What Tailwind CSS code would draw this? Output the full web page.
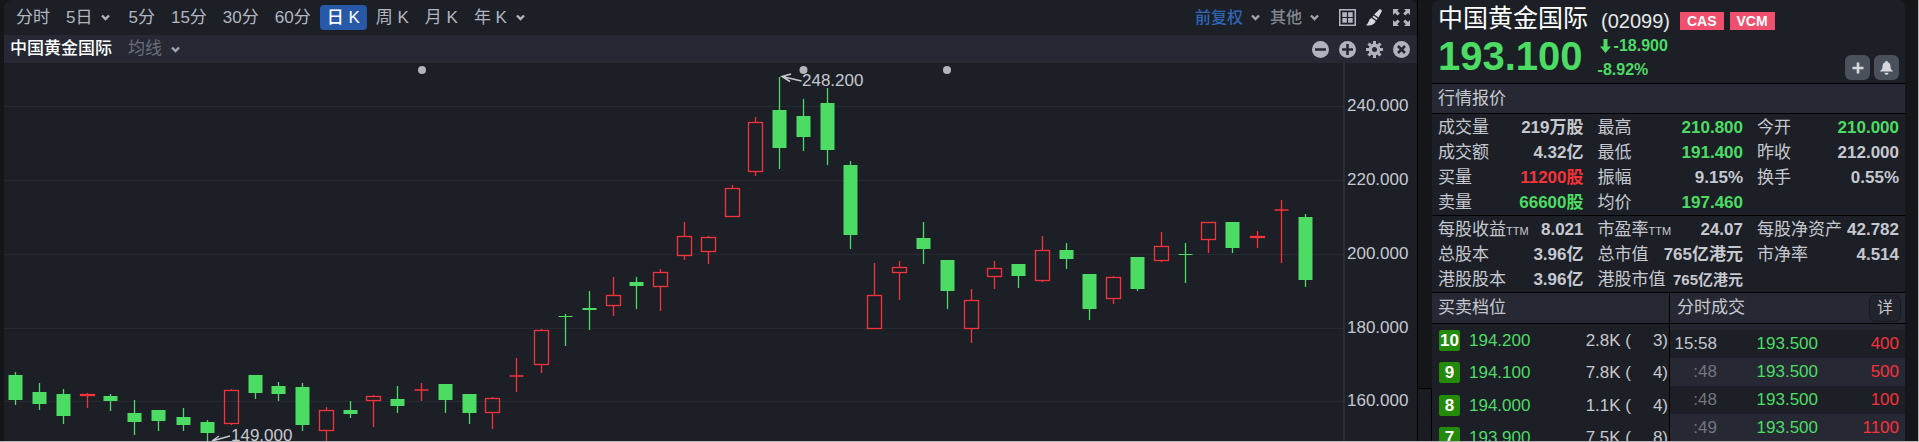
<!DOCTYPE html>
<html lang="zh-CN">
<head>
  <meta charset="UTF-8" />
  <meta name="viewport" content="width=device-width, initial-scale=1" />
  <title>中国黄金国际 (02099)</title>
  <script src="https://cdn.jsdelivr.net/npm/@tailwindcss/browser@4"></script>
</head>
<body class="flex h-screen overflow-hidden border-r border-b border-[#b4b4b8] bg-[#14161a] pl-1 font-['Liberation_Sans','Noto_Sans_CJK_SC',sans-serif] text-[#c6c8d0]">

  <!-- Chart panel -->
  <main class="flex min-w-0 flex-1 flex-col overflow-hidden rounded-t-lg bg-[#1c1f26]">
    <!-- Periods -->
    <nav class="flex h-[35px] shrink-0 items-center justify-between pr-[7px] pl-3 text-[17px] text-[#b3b6c0]">
      <div class="flex items-center gap-4 whitespace-nowrap">
        <button>分时</button>
        <button class="flex items-center gap-[9px] pr-0.5">5日
          <svg class="h-[7px] w-[9px]" viewBox="0 0 9 7" fill="none" stroke="currentColor" stroke-width="2.4"><path d="M1 1.5 4.5 5 8 1.5" /></svg>
        </button>
        <button>5分</button>
        <button>15分</button>
        <button>30分</button>
        <button>60分</button>
        <button class="-mx-[7px] h-[25px] rounded-sm bg-[#2858a8] px-[7px] leading-[25px] font-medium text-white">日 K</button>
        <button>周 K</button>
        <button>月 K</button>
        <button class="flex items-center gap-[9px]">年 K
          <svg class="h-[7px] w-[9px]" viewBox="0 0 9 7" fill="none" stroke="currentColor" stroke-width="2.4"><path d="M1 1.5 4.5 5 8 1.5" /></svg>
        </button>
      </div>
      <div class="flex items-center gap-2.5 text-base whitespace-nowrap">
        <button class="flex items-center gap-2 font-medium text-[#2f66b8]">前复权
          <svg class="h-[7px] w-[9px] text-[#a4a7b0]" viewBox="0 0 9 7" fill="none" stroke="currentColor" stroke-width="2.4"><path d="M1 1.5 4.5 5 8 1.5" /></svg>
        </button>
        <button class="mr-2.5 flex items-center gap-2 font-medium text-[#83868f]">其他
          <svg class="h-[7px] w-[9px] text-[#a4a7b0]" viewBox="0 0 9 7" fill="none" stroke="currentColor" stroke-width="2.4"><path d="M1 1.5 4.5 5 8 1.5" /></svg>
        </button>
        <button aria-label="多图">
          <svg class="size-[17px]" viewBox="0 0 17 17" fill="currentColor"><path fill-rule="evenodd" d="M0 0h17v17H0zM1.5 1.5v14h14v-14z" /><path d="M3.3 3.3h4.6v4.6H3.3zM9.1 3.3h4.6v4.6H9.1zM3.3 9.1h4.6v4.6H3.3zM9.1 9.1h4.6v4.6H9.1z" /></svg>
        </button>
        <button class="text-[#d5d7dc]" aria-label="画线">
          <svg class="size-[17px]" viewBox="0 0 17 17" fill="currentColor"><path d="M13 .8c1-1.200 3.400.2 2.700 1.700L12.500 8.600 8.200 5.500zM7.500 6.400l4.200 3-1.200 1.700-4.100-3zM5.600 9l4.100 3c-.9 3.500-5 5-9.700 4.200 2.800-1.300 2.500-6.300 5.600-7.200z" /></svg>
        </button>
        <button aria-label="全屏">
          <svg class="size-[17px]" viewBox="0 0 17 17" fill="currentColor"><path d="M0 0h6L4.200 1.800l2.600 2.600-2.200 2.200L2 4 0 6zM17 0h-6l1.800 1.800-2.600 2.600 2.200 2.200L15 4l2 2zM0 17h6l-1.800-1.800 2.600-2.600-2.200-2.200L2 13l-2-2zM17 17h-6l1.800-1.800-2.600-2.600 2.200-2.200L15 13l2-2z" /></svg>
        </button>
      </div>
    </nav>

    <!-- Indicator bar -->
    <div class="flex h-7 shrink-0 items-center justify-between bg-[#262833] pr-[7px] pl-1.5 text-[17px]">
      <div class="flex items-center gap-4">
        <h2 class="font-medium text-white">中国黄金国际</h2>
        <button class="flex items-center gap-[9px] text-[#6c6f79]">均线
          <svg class="h-[7px] w-[9px] text-[#a4a7b0]" viewBox="0 0 9 7" fill="none" stroke="currentColor" stroke-width="2.4"><path d="M1 1.5 4.5 5 8 1.5" /></svg>
        </button>
      </div>
      <div class="flex items-center gap-2.5 text-[#b0b3bb]">
        <button aria-label="缩小">
          <svg class="size-[17px]" viewBox="0 0 17 17"><circle cx="8.5" cy="8.5" r="8.5" fill="currentColor" /><path d="M3 8.5h11" stroke="#262833" stroke-width="2.6" /></svg>
        </button>
        <button aria-label="放大">
          <svg class="size-[17px]" viewBox="0 0 17 17"><circle cx="8.5" cy="8.5" r="8.5" fill="currentColor" /><path d="M3 8.5h11M8.5 3v11" stroke="#262833" stroke-width="2.6" /></svg>
        </button>
        <button aria-label="设置">
          <svg class="size-[17px]" viewBox="0 0 17 17"><circle cx="8.5" cy="8.5" r="4.2" fill="none" stroke="currentColor" stroke-width="3.4" /><path d="M8.5 0v3M8.5 14v3M0 8.5h3M14 8.5h3M2.5 2.5l2.1 2.1M12.4 12.4l2.1 2.1M2.5 14.5l2.1-2.1M12.4 4.6l2.1-2.1" stroke="currentColor" stroke-width="3" /></svg>
        </button>
        <button aria-label="关闭">
          <svg class="size-[17px]" viewBox="0 0 17 17"><circle cx="8.5" cy="8.5" r="8.5" fill="currentColor" /><path d="M5 5l7 7M12 5l-7 7" stroke="#262833" stroke-width="2.6" /></svg>
        </button>
      </div>
    </div>

    <!-- Candles -->
    <div class="min-h-0 flex-1 overflow-hidden">
      <svg id="chart" class="block w-full" viewBox="4 63 1413 379">
        <g stroke="#262932" stroke-width="1">
          <path d="M4 106.5h1340M4 180.5h1340M4 254.5h1340M4 328.5h1340M4 401.5h1340" />
          <path d="M1344 63v379" stroke="#2a2d35" stroke-width="2" />
        </g>
        <g fill="#b2b4b7">
          <circle cx="422" cy="70" r="4" />
          <circle cx="803.5" cy="70" r="4" />
          <circle cx="947" cy="70" r="4" />
        </g>
        <g id="candles" stroke-width="1.3"></g>
        <g fill="none" stroke="#c6c8d0" stroke-width="1.5">
          <path d="M801.5 81 782 76.5M791 74 782 76.5l8 5" />
          <path d="M230 436 212 441M219 436 212 441" />
        </g>
        <g class="text-[17px]" fill="#c6c8d0">
          <text x="802" y="86">248.200</text>
          <text x="231" y="441">149.000</text>
          <text x="1347" y="111">240.000</text>
          <text x="1347" y="185">220.000</text>
          <text x="1347" y="259">200.000</text>
          <text x="1347" y="333">180.000</text>
          <text x="1347" y="406">160.000</text>
        </g>
      </svg>
    </div>
  </main>

  <!-- Splitter -->
  <div class="flex w-[15px] shrink-0 flex-col justify-end border-l border-black">
    <div class="h-[53px] border-t border-r border-black bg-[#1a1c21]"></div>
  </div>

  <!-- Quote panel -->
  <aside class="mr-[13px] w-[473px] shrink-0 overflow-hidden rounded-t-lg bg-[#1c1f26] text-[17px] whitespace-nowrap">
    <header class="flex h-[83px] justify-between px-1.5">
      <div>
        <div class="flex h-[37px] items-center">
          <h1 class="text-[25px] text-white">中国黄金国际</h1>
          <span class="mt-1 ml-[13px] text-xl text-[#e6e7ea]">(02099)</span>
          <span class="mt-1 ml-2.5 h-[18px] bg-[#f0506e] px-[7px] text-sm leading-[18px] font-bold text-white">CAS</span>
          <span class="mt-1 ml-1.5 h-[18px] bg-[#f0506e] px-[7px] text-sm leading-[18px] font-bold text-white">VCM</span>
        </div>
        <div class="flex gap-[15px] font-bold text-[#4cdc64]">
          <p class="text-[40px] leading-[38px]">193.100</p>
          <div class="flex flex-col gap-1 text-base">
            <p class="flex h-[17px] items-center">
              <svg class="mr-[3px] ml-[2px] h-[14px] w-[11px]" viewBox="0 0 11 14" fill="currentColor"><path d="M3.500 0h4v7.500H11L5.500 14 0 7.500h3.500z" /></svg>-18.900
            </p>
            <p>-8.92%</p>
          </div>
        </div>
      </div>
      <div class="flex items-end gap-1 pb-[3px] text-[#d5d7dc]">
        <button class="grid size-[25px] place-items-center rounded-md bg-[#4b515b]" aria-label="添加自选">
          <svg class="size-3" viewBox="0 0 12 12" stroke="currentColor" stroke-width="2.600"><path d="M6 .5v11M.5 6h11" /></svg>
        </button>
        <button class="grid size-[25px] place-items-center rounded-md bg-[#4b515b]" aria-label="提醒">
          <svg class="h-[14px] w-[13px]" viewBox="0 0 13 14" fill="currentColor"><path d="M6.500 0c.8 0 1.300.5 1.300 1.200 1.900.6 2.700 2 2.700 4.200 0 2.300.7 3.500 2.300 4.300v.8H.2v-.8C1.800 8.900 2.500 7.700 2.500 5.400c0-2.200.8-3.600 2.700-4.200C5.200.5 5.700 0 6.500 0zM4.500 11.700h4c-.2 1.400-1 2-2 2s-1.800-.6-2-2z" /></svg>
        </button>
      </div>
    </header>

    <h2 class="flex h-[31px] items-center border-y border-black bg-[#262833] px-1.5">行情报价</h2>

    <dl class="grid grid-cols-[1fr_1fr_142px] gap-x-3.5 px-1.5 pt-px leading-[25px] [&_dd]:font-bold [&>div]:flex [&>div]:h-[25px] [&>div]:justify-between">
      <div><dt>成交量</dt><dd>219万股</dd></div>
      <div><dt>最高</dt><dd class="text-[#4cdc64]">210.800</dd></div>
      <div><dt>今开</dt><dd class="text-[#4cdc64]">210.000</dd></div>
      <div><dt>成交额</dt><dd>4.32亿</dd></div>
      <div><dt>最低</dt><dd class="text-[#4cdc64]">191.400</dd></div>
      <div><dt>昨收</dt><dd>212.000</dd></div>
      <div><dt>买量</dt><dd class="text-[#f5333a]">11200股</dd></div>
      <div><dt>振幅</dt><dd>9.15%</dd></div>
      <div><dt>换手</dt><dd>0.55%</dd></div>
      <div><dt>卖量</dt><dd class="text-[#4cdc64]">66600股</dd></div>
      <div><dt>均价</dt><dd class="text-[#4cdc64]">197.460</dd></div>
    </dl>

    <dl class="grid grid-cols-[1fr_1fr_142px] gap-x-3.5 border-t border-black px-1.5 pt-px leading-[25px] [&_dd]:font-bold [&>div]:flex [&>div]:h-[25px] [&>div]:justify-between">
      <div><dt>每股收益<small class="text-[11px]">TTM</small></dt><dd>8.021</dd></div>
      <div><dt>市盈率<small class="text-[11px]">TTM</small></dt><dd>24.07</dd></div>
      <div><dt>每股净资产</dt><dd>42.782</dd></div>
      <div><dt>总股本</dt><dd>3.96亿</dd></div>
      <div><dt>总市值</dt><dd>765亿港元</dd></div>
      <div><dt>市净率</dt><dd>4.514</dd></div>
      <div><dt>港股股本</dt><dd>3.96亿</dd></div>
      <div><dt>港股市值</dt><dd class="text-[15px]">765亿港元</dd></div>
    </dl>

    <div class="flex">
      <!-- Order book -->
      <section class="w-[238px] border-r border-black">
        <h2 class="flex h-8 items-center border-y border-black bg-[#262833] px-1.5">买卖档位</h2>
        <table class="h-[130px] w-full table-fixed">
          <tbody id="book"></tbody>
        </table>
      </section>
      <!-- Trades -->
      <section class="flex-1">
        <div class="flex h-8 items-center justify-between border-y border-black bg-[#262833] pr-1 pl-[7px]">
          <h2>分时成交</h2>
          <button class="h-[27px] rounded-md border border-[#191b20] bg-[#21242c] px-[7px] text-base">详</button>
        </div>
        <div class="h-1.5 bg-[#23252f]"></div>
        <table class="w-full table-fixed">
          <tbody id="trades"></tbody>
        </table>
      </section>
    </div>
  </aside>

  <script>
    // [x, high, low, body top, body bottom, 1 = up / 0 = down]
    const candles = [
      [15, 372, 405, 375, 400, 0], [39, 383, 410, 392, 404, 0], [63, 389, 424, 394, 416, 0],
      [87, 393, 408, 394, 396, 1], [110, 394, 411, 396, 401, 0], [134, 400, 435, 413, 422, 0],
      [158, 410, 431, 410, 421, 0], [183, 408, 431, 417, 425, 0], [207, 420, 442, 422, 433, 0],
      [231, 389, 425, 390, 424, 1], [255, 375, 399, 375, 393, 0], [278, 382, 401, 386, 394, 0],
      [302, 383, 431, 387, 425, 0], [326, 407, 442, 410, 431, 1], [350, 401, 418, 410, 414, 0],
      [373, 395, 427, 396, 401, 1], [397, 386, 413, 399, 406, 0], [421, 383, 401, 390, 390, 1],
      [445, 384, 413, 384, 400, 0], [469, 394, 424, 394, 413, 0], [492, 397, 429, 398, 413, 1],
      [516, 358, 392, 376, 376, 1], [541, 329, 373, 330, 365, 1], [565, 314, 346, 316, 317, 0],
      [589, 291, 330, 308, 310, 0], [613, 277, 316, 295, 306, 1], [636, 277, 309, 282, 286, 0],
      [660, 269, 311, 272, 287, 1], [684, 222, 260, 236, 256, 1], [708, 236, 264, 237, 252, 1],
      [732, 185, 217, 188, 217, 1], [755, 117, 176, 122, 172, 1], [779, 77, 169, 110, 148, 0],
      [803, 99, 151, 116, 137, 0], [827, 88, 165, 103, 150, 0], [850, 161, 249, 165, 235, 0],
      [874, 263, 329, 295, 329, 1], [899, 261, 300, 267, 273, 1], [923, 222, 264, 238, 249, 0],
      [947, 260, 309, 260, 291, 0], [971, 289, 343, 300, 329, 1], [994, 261, 289, 268, 277, 1],
      [1018, 264, 288, 264, 276, 0], [1042, 236, 282, 250, 281, 1], [1066, 243, 269, 250, 259, 0],
      [1089, 274, 320, 274, 309, 0], [1113, 276, 304, 277, 299, 1], [1137, 257, 291, 257, 289, 0],
      [1161, 232, 262, 246, 261, 1], [1185, 243, 283, 254, 255, 0], [1208, 222, 253, 222, 240, 1],
      [1232, 222, 253, 222, 248, 0], [1257, 231, 248, 236, 238, 1], [1281, 200, 263, 210, 210, 1],
      [1305, 214, 287, 217, 280, 0]
    ];
    document.getElementById('candles').innerHTML = candles.map(([x, high, low, top, bottom, up]) => {
      if (!up) {
        return `<path d="M${x + 0.5} ${high}V${low}" stroke="#4cdc64"/><rect x="${x - 6.5}" y="${top}" width="14" height="${bottom - top}" fill="#4cdc64"/>`;
      }
      // no body, only a tick across the wick
      if (top === bottom) {
        return `<path d="M${x + 0.5} ${high}V${low}M${x - 6.5} ${top}h14" stroke="#f5333a"/>`;
      }
      return `<path d="M${x + 0.5} ${high}V${top}M${x + 0.5} ${bottom}V${low}" stroke="#f5333a"/><rect x="${x - 6.5}" y="${top + 0.5}" width="14" height="${bottom - top - 1}" fill="${bottom - top < 3 ? '#f5333a' : 'none'}" stroke="#f5333a"/>`;
    }).join('');

    // Ask levels
    const book = [
      [10, '194.200', '2.8K', 3],
      [9, '194.100', '7.8K', 4],
      [8, '194.000', '1.1K', 4],
      [7, '193.900', '7.5K', 8]
    ];
    document.getElementById('book').innerHTML = book.map(([level, price, qty, orders]) => `
      <tr>
        <td class="w-[37px] pl-[7px]"><span class="block size-[21px] rounded-xs bg-[#238a0a] text-center leading-[22px] font-bold text-white">${level}</span></td>
        <td class="text-[#4cdc64]">${price}</td>
        <td class="w-[60px] text-right">${qty} (</td>
        <td class="w-[38px] pr-px text-right">${orders})</td>
      </tr>`).join('');

    // Latest trades
    const trades = [
      ['15:58', '193.500', 400],
      [':48', '193.500', 500],
      [':48', '193.500', 100],
      [':49', '193.500', 1100]
    ];
    document.getElementById('trades').innerHTML = trades.map(([time, price, vol], i) => `
      <tr class="h-7 even:bg-[#262833]">
        <td class="w-[47px] text-right ${i ? 'text-[#73767f]' : ''}">${time}</td>
        <td class="w-[101px] text-right text-[#4cdc64]">${price}</td>
        <td class="pr-1.5 text-right text-[#f5333a]">${vol}</td>
      </tr>`).join('');
  </script>
</body>
</html>
